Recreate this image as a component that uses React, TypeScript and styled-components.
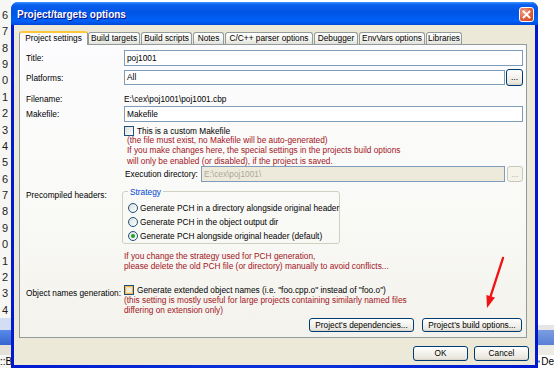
import styled, { createGlobalStyle } from "styled-components"

const GlobalStyle = createGlobalStyle`
  html, body {
    margin: 0;
    padding: 0;
    background: #fff;
  }
  body {
    width: 554px;
    height: 368px;
    overflow: hidden;
  }
`

const Screen = styled.div`
  position: relative;
  width: 554px;
  height: 368px;
  overflow: hidden;
  display: grid;
  grid-template-columns: 11px 527px 16px;
  font-family: "Liberation Sans", Arial, sans-serif;
  font-size: 8.3px;
  color: #000;
  background: #fff;
`

const SideColumn = styled.div<{ $bg: string }>`
  display: flex;
  flex-direction: column;
  overflow: hidden;
  background: ${p => p.$bg};
`

const LineNumbers = styled.div`
  flex: none;
  margin-top: 6.8px;
`

const LineNo = styled.div`
  height: 16.4px;
  line-height: 16.4px;
  padding-right: 3px;
  text-align: right;
  font-size: 11px;
  color: #1e1e1e;
`

const Filler = styled.div`
  flex: 1;
`

const Strip = styled.div<{ $h: number; $bg: string }>`
  flex: none;
  height: ${p => p.$h}px;
  background: ${p => p.$bg};
`

const StripText = styled.div`
  flex: none;
  height: 13px;
  display: flex;
  align-items: center;
  gap: 1px;
  font-size: 10px;
  white-space: nowrap;
  color: #000;
`

const Dialog = styled.div`
  margin-top: 2px;
  height: 366px;
  display: flex;
  flex-direction: column;
  background: linear-gradient(90deg, #0019cf, #0831d9 40%, #0831d9 60%, #0019cf);
  border-radius: 7px 7px 0 0;
  overflow: hidden;
`

const TitleBar = styled.div`
  flex: none;
  height: 23px;
  box-sizing: border-box;
  padding: 2px 4px 0 6px;
  display: flex;
  align-items: center;
  justify-content: space-between;
  background: linear-gradient(180deg, #3d95ff 0%, #0a5fef 12%, #0055e5 45%, #0060f8 82%, #0048d8 100%);
`

const TitleText = styled.span`
  font-size: 10px;
  font-weight: bold;
  color: #fff;
  text-shadow: 1px 1px #0f1089;
`

const CloseButton = styled.div`
  width: 15px;
  height: 15px;
  box-sizing: border-box;
  border: 1px solid #fff;
  border-radius: 3px;
  background: radial-gradient(circle at 30% 30%, #f0a286, #e0603d 55%, #c23d1b);
  display: flex;
  align-items: center;
  justify-content: center;
`

const Body = styled.div`
  flex: 1;
  margin: 0 3px 3px;
  padding: 6px 8px 0 5px;
  background: #ece9d8;
  display: flex;
  flex-direction: column;
`

const TabStrip = styled.div`
  flex: none;
  height: 13px;
  display: flex;
  align-items: flex-end;
  gap: 1px;
`

const Tab = styled.div<{ $w: number; $active?: boolean }>`
  position: relative;
  z-index: ${p => (p.$active ? 1 : 0)};
  box-sizing: border-box;
  width: ${p => p.$w}px;
  height: ${p => (p.$active ? 14 : 12)}px;
  margin-bottom: ${p => (p.$active ? -1 : 0)}px;
  margin-right: ${p => (p.$active ? -1 : 0)}px;
  border: 1px solid #919b9c;
  border-bottom: none;
  border-top: ${p => (p.$active ? "2px solid #ffc83c" : "1px solid #919b9c")};
  border-radius: 3px 3px 0 0;
  background: ${p => (p.$active ? "#fcfcfe" : "linear-gradient(180deg, #fff, #f3f3ef 60%, #e2e1d9)")};
  line-height: 10px;
  text-align: center;
  white-space: nowrap;
`

const Panel = styled.div`
  flex: none;
  box-sizing: border-box;
  width: 508px;
  border: 1px solid #919b9c;
  padding: 5px 3px 5px 6px;
  background: linear-gradient(180deg, #fcfcfe 0%, #f9f9f6 60%, #f3f2ec 100%);
  display: flex;
  flex-direction: column;
`

const FormRow = styled.div<{ $mt?: number }>`
  display: grid;
  grid-template-columns: 98px 1fr;
  align-items: start;
  margin-top: ${p => p.$mt ?? 0}px;
`

const Label = styled.div<{ $lh?: number; $pt?: number }>`
  line-height: ${p => p.$lh ?? 10}px;
  padding-top: ${p => p.$pt ?? 0}px;
  white-space: nowrap;
`

const Field = styled.div`
  display: flex;
  flex-direction: column;
`

const InlineField = styled.div`
  display: flex;
  align-items: center;
  gap: 1px;
`

const InlineLabel = styled.span`
  flex: none;
  width: 75px;
  padding-left: 1px;
  line-height: 16px;
  white-space: nowrap;
`

const TextBox = styled.div<{ $h: number; $disabled?: boolean }>`
  flex: 1;
  box-sizing: border-box;
  height: ${p => p.$h}px;
  line-height: ${p => p.$h - 2}px;
  padding: 0 2px;
  border: 1px solid #7f9db9;
  background: ${p => (p.$disabled ? "#edeadc" : "#fff")};
  color: ${p => (p.$disabled ? "#aca899" : "#000")};
  white-space: nowrap;
`

const XpButton = styled.div<{ $w: number; $h?: number; $disabled?: boolean }>`
  flex: none;
  box-sizing: border-box;
  width: ${p => p.$w}px;
  height: ${p => p.$h ?? 14}px;
  line-height: ${p => (p.$h ?? 14) - 2}px;
  border: 1px solid ${p => (p.$disabled ? "#c9c7ba" : "#003c74")};
  border-radius: 3px;
  background: ${p =>
    p.$disabled
      ? "#f5f4ea"
      : "linear-gradient(180deg, #ffffff 0%, #f5f4ef 40%, #e9e7de 85%, #d8d2c6 100%)"};
  color: ${p => (p.$disabled ? "#aca899" : "#000")};
  text-align: center;
  white-space: nowrap;
`

const CheckLine = styled.div<{ $lh?: number }>`
  display: flex;
  align-items: center;
  gap: 3px;
  line-height: ${p => p.$lh ?? 10}px;
  white-space: nowrap;
`

const CheckBox = styled.span<{ $hover?: boolean }>`
  flex: none;
  box-sizing: border-box;
  width: 10px;
  height: 10px;
  border: 1px solid #1c5180;
  background: linear-gradient(135deg, #dcdcd7, #fff);
  box-shadow: ${p => (p.$hover ? "inset 0 0 0 1px #f8b448, inset 0 0 0 2px #fde2a2" : "none")};
`

const Note = styled.div<{ $lh?: number; $indent?: number; $mt?: number }>`
  color: #a3141c;
  line-height: ${p => p.$lh ?? 10}px;
  padding-left: ${p => p.$indent ?? 0}px;
  margin-top: ${p => p.$mt ?? 0}px;
  white-space: nowrap;
`

const GroupBox = styled.fieldset`
  box-sizing: border-box;
  width: 218px;
  margin: 0 0 0 -2px;
  padding: 4px 0 0 4px;
  border: 1px solid #d0d0bf;
  border-radius: 3px;
  min-inline-size: 0;
`

const GroupTitle = styled.legend`
  margin-left: 1px;
  padding: 0 2px;
  line-height: 10px;
  color: #0046d5;
`

const RadioLine = styled.div`
  height: 14px;
  display: flex;
  align-items: center;
  gap: 2px;
  padding-left: 1px;
  white-space: nowrap;
`

const Radio = styled.span<{ $on?: boolean }>`
  flex: none;
  box-sizing: border-box;
  width: 10px;
  height: 10px;
  border-radius: 50%;
  border: 1px solid #1c5180;
  background: linear-gradient(135deg, #dcdcd7, #fff);
  display: inline-flex;
  align-items: center;
  justify-content: center;
  &::after {
    content: "";
    width: 4px;
    height: 4px;
    border-radius: 50%;
    background: ${p => (p.$on ? "#21a121" : "transparent")};
  }
`

const ButtonRow = styled.div<{ $mt?: number; $gap: number; $mr?: number }>`
  display: flex;
  justify-content: flex-end;
  gap: ${p => p.$gap}px;
  margin-top: ${p => p.$mt ?? 0}px;
  margin-right: ${p => p.$mr ?? 0}px;
`

const Arrow = styled.svg`
  position: absolute;
  left: 478px;
  top: 252px;
`

const tabs = [
  { name: "Project settings", w: 69 },
  { name: "Build targets", w: 52 },
  { name: "Build scripts", w: 51 },
  { name: "Notes", w: 31 },
  { name: "C/C++ parser options", w: 88 },
  { name: "Debugger", w: 44 },
  { name: "EnvVars options", w: 66 },
  { name: "Libraries", w: 36 },
]

const lineDigits = ["6", "7", "8", "9", "0", "1", "2", "3", "4", "5", "6", "7", "8", "9", "0", "1", "2", "3", "4"]

export default function App() {
  return (
    <>
      <GlobalStyle />
      <Screen>
        <SideColumn $bg="#f6f6f4">
          <LineNumbers>
            {lineDigits.map((d, i) => (
              <LineNo key={i}>{d}</LineNo>
            ))}
          </LineNumbers>
          <Filler />
          <Strip $h={12} $bg="#d3def5" />
          <Strip $h={15} $bg="linear-gradient(180deg, #5a8ae6, #3565cf)" />
          <Strip $h={10} $bg="#e4e2d8" />
          <StripText>::B</StripText>
        </SideColumn>

        <Dialog>
          <TitleBar>
            <TitleText>Project/targets options</TitleText>
            <CloseButton>
              <svg width="9" height="9" viewBox="0 0 9 9">
                <path d="M1.5 1.5 L7.5 7.5 M7.5 1.5 L1.5 7.5" stroke="#fff" strokeWidth="1.8" strokeLinecap="square" />
              </svg>
            </CloseButton>
          </TitleBar>

          <Body>
            <TabStrip>
              {tabs.map((t, i) => (
                <Tab key={t.name} $w={t.w} $active={i === 0}>
                  {t.name}
                </Tab>
              ))}
            </TabStrip>

            <Panel>
              <FormRow>
                <Label $lh={16}>Title:</Label>
                <TextBox $h={16}>poj1001</TextBox>
              </FormRow>

              <FormRow $mt={3}>
                <Label $lh={17} $pt={1}>Platforms:</Label>
                <InlineField>
                  <TextBox $h={15}>All</TextBox>
                  <XpButton $w={17} $h={17}>...</XpButton>
                </InlineField>
              </FormRow>

              <FormRow $mt={6}>
                <Label $lh={12}>Filename:</Label>
                <Label $lh={12}>{"E:\\cex\\poj1001\\poj1001.cbp"}</Label>
              </FormRow>

              <FormRow $mt={1}>
                <Label $lh={16}>Makefile:</Label>
                <TextBox $h={16}>Makefile</TextBox>
              </FormRow>

              <FormRow $mt={4}>
                <span />
                <Field>
                  <CheckLine>
                    <CheckBox />
                    This is a custom Makefile
                  </CheckLine>
                  <Note $lh={10.3} $indent={3} $mt={-1}>
                    (the file must exist, no Makefile will be auto-generated)
                    <br />
                    If you make changes here, the special settings in the projects build options
                    <br />
                    will only be enabled (or disabled), if the project is saved.
                  </Note>
                </Field>
              </FormRow>

              <FormRow>
                <span />
                <InlineField>
                  <InlineLabel>Execution directory:</InlineLabel>
                  <TextBox $h={16} $disabled>
                    {"E:\\cex\\poj1001\\"}
                  </TextBox>
                  <XpButton $w={16} $h={16} $disabled style={{ marginLeft: 1 }}>
                    ...
                  </XpButton>
                </InlineField>
              </FormRow>

              <FormRow $mt={5}>
                <Label $pt={3}>Precompiled headers:</Label>
                <GroupBox>
                  <GroupTitle>Strategy</GroupTitle>
                  <RadioLine>
                    <Radio />
                    Generate PCH in a directory alongside original header
                  </RadioLine>
                  <RadioLine>
                    <Radio />
                    Generate PCH in the object output dir
                  </RadioLine>
                  <RadioLine>
                    <Radio $on />
                    Generate PCH alongside original header (default)
                  </RadioLine>
                </GroupBox>
              </FormRow>

              <FormRow $mt={7}>
                <span />
                <Note $lh={10.5}>
                  If you change the strategy used for PCH generation,
                  <br />
                  please delete the old PCH file (or directory) manually to avoid conflicts...
                </Note>
              </FormRow>

              <FormRow $mt={13}>
                <Label $pt={3}>Object names generation:</Label>
                <Field>
                  <CheckLine>
                    <CheckBox $hover />
                    Generate extended object names (i.e. "foo.cpp.o" instead of "foo.o")
                  </CheckLine>
                  <Note>
                    (this setting is mostly useful for large projects containing similarly named files
                    <br />
                    differing on extension only)
                  </Note>
                </Field>
              </FormRow>

              <ButtonRow $mt={3} $gap={8} $mr={1}>
                <XpButton $w={105}>Project's dependencies...</XpButton>
                <XpButton $w={100}>Project's build options...</XpButton>
              </ButtonRow>
            </Panel>

            <ButtonRow $mt={8} $gap={6} $mr={-2}>
              <XpButton $w={55} $h={15}>OK</XpButton>
              <XpButton $w={55} $h={15}>Cancel</XpButton>
            </ButtonRow>
          </Body>
        </Dialog>

        <SideColumn $bg="#ffffff">
          <Filler />
          <Strip $h={5} $bg="#e6e6e6" />
          <Strip $h={15} $bg="linear-gradient(180deg, #7b9de0, #5a80d6)" />
          <Strip $h={10} $bg="#ecebe4" />
          <StripText>
            <svg width="7" height="7" viewBox="0 0 7 7">
              <circle cx="3.5" cy="3.5" r="3" fill="#2e7ad8" stroke="#1a4fa0" strokeWidth="0.8" />
            </svg>
            De
          </StripText>
        </SideColumn>

        <Arrow width="32" height="60" viewBox="0 0 32 60">
          <line x1="25" y1="6" x2="12" y2="46" stroke="#f01414" strokeWidth="2.4" strokeLinecap="round" />
          <polygon points="9,56 17,45.5 8.4,43" fill="#f01414" />
        </Arrow>
      </Screen>
    </>
  )
}
